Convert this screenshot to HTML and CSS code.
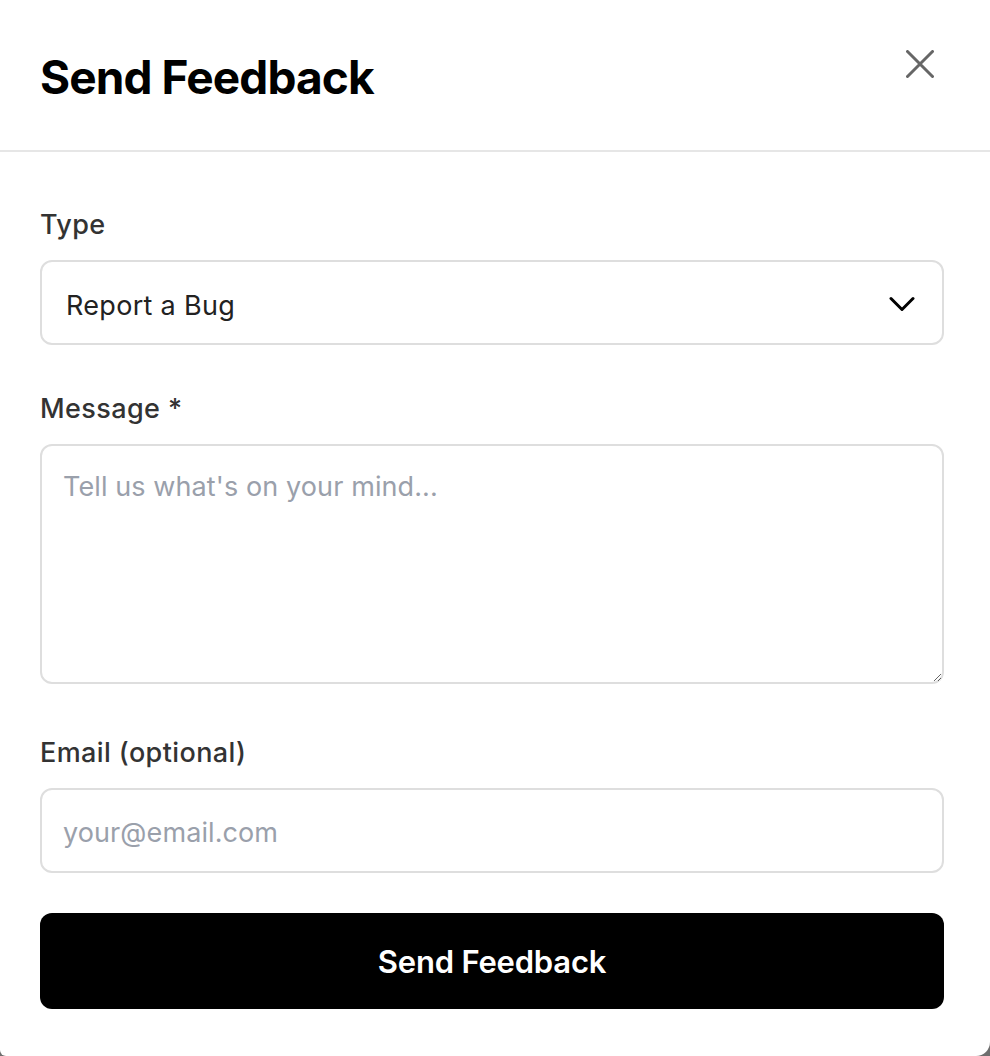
FILE: index.html
```html
<!DOCTYPE html>
<html lang="en">
<head>
<meta charset="utf-8">
<title>Send Feedback</title>
<link rel="stylesheet" href="styles.css">
</head>
<body>
<div class="modal">
  <header class="modal-header">
    <h1 class="modal-title">Send Feedback</h1>
    <button class="close-btn" type="button" aria-label="Close">
      <svg width="28" height="28" viewBox="0 0 28 28" fill="none" stroke="currentColor" stroke-width="3" stroke-linecap="round"><path d="M1.5 1.5 L26.5 26.5 M26.5 1.5 L1.5 26.5"/></svg>
    </button>
  </header>
  <form class="modal-body">
    <div class="field field-type">
      <label class="label" for="type">Type</label>
      <div class="select-wrap">
        <select id="type" class="control select">
          <option>Report a Bug</option>
          <option>Feature Request</option>
          <option>General Feedback</option>
        </select>
        <svg class="chevron" width="26" height="16" viewBox="0 0 26 16" fill="none" stroke="currentColor" stroke-width="3" stroke-linecap="round" stroke-linejoin="round"><path d="M2 2.5 L13 13.5 L24 2.5"/></svg>
      </div>
    </div>
    <div class="field field-msg">
      <label class="label" for="msg">Message *</label>
      <textarea id="msg" class="control textarea" placeholder="Tell us what's on your mind..."></textarea>
    </div>
    <div class="field field-email">
      <label class="label" for="email">Email (optional)</label>
      <input id="email" class="control input" type="email" placeholder="your@email.com">
    </div>
    <button class="submit" type="button">Send Feedback</button>
  </form>
</div>
</body>
</html>
```
FILE: styles.css
```css
html, body {
  margin: 0;
  padding: 0;
}
body {
  background: #6e6e6e;
  font-family: Inter, "Noto Sans", "Liberation Sans", sans-serif;
  color: #222;
}
.modal {
  background: #fff;
  width: 990px;
  height: 1056px;
  border-radius: 0 0 14px 6px;
  box-sizing: border-box;
}
.modal-header {
  height: 152px;
  box-sizing: border-box;
  border-bottom: 2px solid #e6e6e6;
  padding: 0 40px;
  display: flex;
  align-items: flex-start;
  justify-content: space-between;
}
.modal-title {
  margin: 50px 0 0;
  font-size: 46px;
  line-height: 54px;
  font-weight: 700;
  letter-spacing: -0.9px;
  color: #000;
}
.close-btn {
  margin: 48px 14px 0 0;
  padding: 0;
  border: 0;
  background: none;
  color: #666;
  width: 32px;
  height: 32px;
  display: flex;
  align-items: center;
  justify-content: center;
  cursor: pointer;
}
.modal-body {
  padding: 55px 46px 0 40px;
  display: flex;
  flex-direction: column;
}
.field {
  display: flex;
  flex-direction: column;
  gap: 17px;
}
.field-type {
  margin-bottom: 46px;
}
.field-msg {
  margin-bottom: 51px;
}
.field-email {
  margin-bottom: 40px;
}
.label {
  font-size: 27px;
  line-height: 36px;
  font-weight: 500;
  color: #333;
  letter-spacing: 0.4px;
}
.control {
  box-sizing: border-box;
  width: 904px;
  border: 2px solid #dedede;
  border-radius: 12px;
  background: #fff;
  font-family: inherit;
  font-size: 27px;
  letter-spacing: 0.1px;
  color: #222;
  outline: none;
}
.control::placeholder {
  color: #9aa0ab;
}
.select-wrap {
  position: relative;
  width: 904px;
}
.select {
  -webkit-appearance: none;
  appearance: none;
  height: 85px;
  padding: 6px 60px 0 24px;
  letter-spacing: 0.3px;
  display: block;
}
.chevron {
  position: absolute;
  right: 29px;
  top: 36px;
  color: #000;
  pointer-events: none;
}
.textarea {
  display: block;
  height: 240px;
  padding: 21px 21px 19px;
  line-height: 40px;
  resize: vertical;
}
.input {
  display: block;
  height: 85px;
  padding: 4px 21px 0;
}
.submit {
  width: 904px;
  height: 96px;
  border: 0;
  border-radius: 12px;
  background: #000;
  color: #fff;
  font-family: inherit;
  font-size: 31px;
  font-weight: 600;
  letter-spacing: -0.2px;
  cursor: pointer;
}
```
